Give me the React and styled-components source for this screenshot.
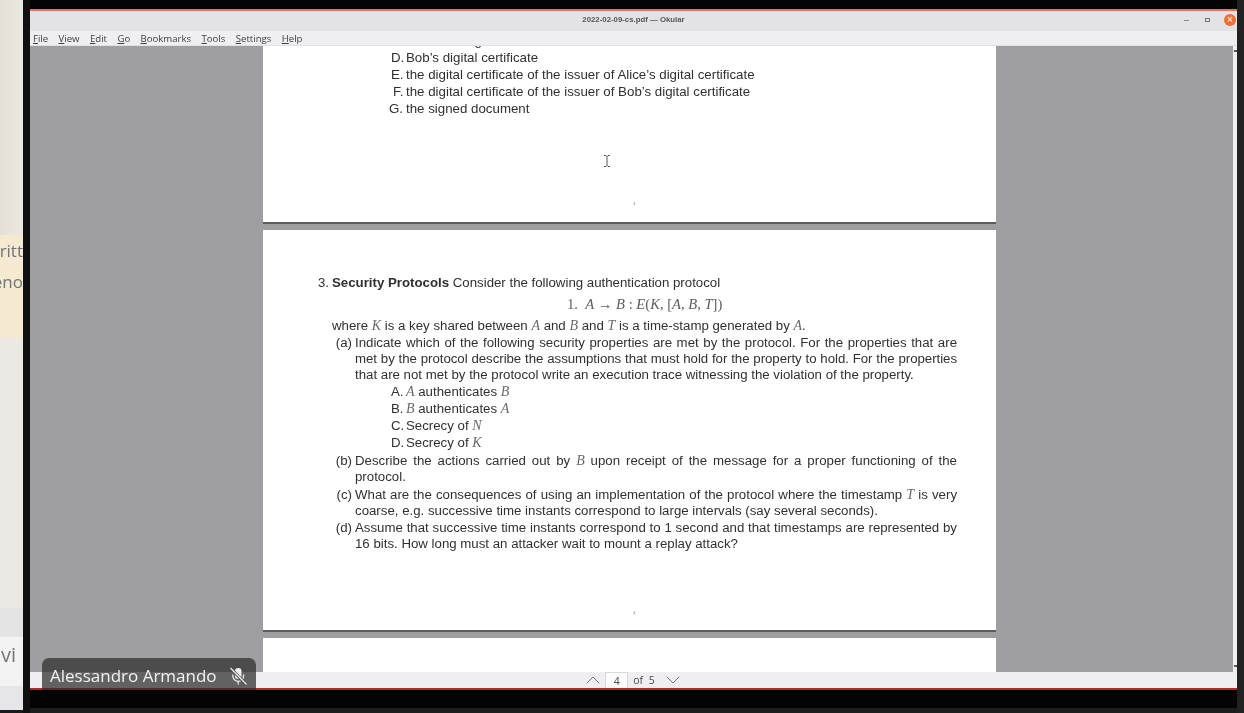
import React from "react";
import styled, { createGlobalStyle } from "styled-components";
import { ChevronUp, ChevronDown } from "lucide-react";

const Global = createGlobalStyle`
  html, body { margin: 0; padding: 0; height: 100%; background: #1c1c1c; overflow: hidden; }
  #root { height: 100%; }
`;

const Screen = styled.div`
  position: relative;
  width: 1244px;
  height: 713px;
  display: flex;
  overflow: hidden;
  background: #1a1a1a;
  filter: blur(0.35px);
  font-family: "Liberation Sans", Arial, sans-serif;
`;

const SideStrip = styled.div`
  width: 23px;
  height: 710px;
  flex: none;
  display: flex;
  flex-direction: column;
  background: #e9e5dd;
  overflow: hidden;
`;
const SideBlock = styled.div`
  flex: ${(p) => p.$grow || "none"};
  height: ${(p) => (p.$h ? `${p.$h}px` : "auto")};
  padding-right: ${(p) => p.$pr || 0}px;
  background: ${(p) => p.$bg};
  color: #6f7478;
  font-family: "Open Sans", sans-serif;
  display: flex;
  flex-direction: column;
  align-items: flex-end;
  white-space: nowrap;
`;
const SideText = styled.span`
  font-size: ${(p) => p.$size}px;
  line-height: ${(p) => p.$lh}px;
  margin-top: ${(p) => p.$mt || 0}px;
`;

const Gutter = styled.div`
  width: 7px;
  flex: none;
  background: #101010;
`;

const Desktop = styled.div`
  width: 1207px;
  flex: none;
  display: flex;
  flex-direction: column;
  height: 713px;
`;
const TopBlack = styled.div`
  height: 9px;
  flex: none;
  background: #040404;
`;
const RedLine = styled.div`
  height: 2px;
  flex: none;
  background: ${(p) => p.$c};
`;
const TitleBar = styled.div`
  height: 20px;
  flex: none;
  background: #e3e2e4;
  display: flex;
  align-items: center;
  justify-content: center;
  position: relative;
  font-size: 7.8px;
  font-weight: 700;
  color: #55555a;
  padding-bottom: 3px;
  box-sizing: border-box;
`;
const WinControls = styled.div`
  position: absolute;
  right: 1px;
  top: 0;
  height: 100%;
  display: flex;
  align-items: center;
  gap: 12px;
  padding-bottom: 2px;
  box-sizing: border-box;
`;
const MinBtn = styled.span`
  width: 5px;
  height: 1px;
  background: #8a8a8a;
`;
const MaxBtn = styled.span`
  border: 1px solid #777;
  width: 3px;
  height: 2px;
  margin-left: 4px;
`;
const CloseBtn = styled.span`
  width: 12px;
  height: 12px;
  border-radius: 50%;
  background: #ee6f33;
  color: #f8ddcc;
  font-size: 10px;
  font-weight: 700;
  line-height: 12px;
  text-align: center;
  margin-left: 2px;
`;
const MenuBar = styled.div`
  height: 15px;
  flex: none;
  background: #efeef0;
  display: flex;
  align-items: center;
  gap: 10.4px;
  padding-left: 3px;
  font-family: "Open Sans", sans-serif;
  font-size: 9.6px;
  color: #3e3e42;
  box-shadow: inset 0 -1px 0 #e0dfe2;
`;
const MenuItem = styled.span`
  u { text-underline-offset: 1px; }
`;

const Main = styled.div`
  flex: 1;
  min-height: 0;
  display: flex;
  background: #efeef0;
`;
const Viewport = styled.div`
  width: 1203px;
  flex: none;
  background: #9f9fa1;
  overflow: hidden;
  display: flex;
  flex-direction: column;
  align-items: center;
  gap: 6px;
`;
const ScrollBar = styled.div`
  flex: 1;
  display: flex;
  flex-direction: column;
  justify-content: space-between;
  align-items: flex-end;
  padding: 4px 0 5px;
  background: #f0eff1;
`;
const ScrollMark = styled.span`
  width: 3px;
  height: 2px;
  background: #55555a;
`;

const Page = styled.div`
  position: relative;
  flex: none;
  width: 733px;
  margin-right: 4px;
  height: ${(p) => p.$h}px;
  margin-top: ${(p) => p.$mt || 0}px;
  background: #fff;
  border-bottom: ${(p) => (p.$open ? "none" : "2px solid #5c5c5e")};
  box-sizing: border-box;
  padding: ${(p) => p.$pad};
  color: #303032;
  font-size: ${(p) => p.$size || 13.25}px;
  line-height: 16px;
`;
const PageDot = styled.span`
  position: absolute;
  left: 370px;
  bottom: ${(p) => p.$b}px;
  font-size: 4px;
  line-height: 4px;
  color: #777;
`;
const Cursor = styled.svg`
  position: absolute;
  left: 340px;
  top: 131px;
`;
const Row = styled.div`
  display: flex;
  height: ${(p) => p.$h || 17}px;
  padding-left: ${(p) => p.$pl || 0}px;
  margin-top: ${(p) => p.$mt || 0}px;
  white-space: nowrap;
`;
const Label = styled.span`
  width: ${(p) => p.$w}px;
  flex: none;
  text-align: right;
  padding-right: 3px;
  box-sizing: border-box;
`;
const Body = styled.div`
  flex: 1;
  min-width: 0;
`;
const Line = styled.div`
  height: 16px;
  line-height: 16px;
  text-align: ${(p) => (p.$j ? "justify" : "left")};
  text-align-last: ${(p) => (p.$j ? "justify" : "left")};
  letter-spacing: ${(p) => (p.$tight ? "-0.04px" : "normal")};
  white-space: normal;
`;
const M = styled.i`
  font-family: "Liberation Serif", "Times New Roman", serif;
  font-size: 14px;
  line-height: 10px;
  color: #6a6a6e;
`;
const Formula = styled.div`
  height: 21px;
  line-height: 21px;
  padding-left: 249px;
  margin-top: 2px;
  font-family: "Liberation Serif", serif;
  font-size: 14.6px;
  color: #5c5c60;
  white-space: nowrap;
`;

const BottomBar = styled.div`
  height: 16px;
  flex: none;
  background: #efeef0;
  display: flex;
  align-items: center;
  justify-content: center;
  padding-right: 1px;
  font-family: "Open Sans", sans-serif;
  font-size: 10.5px;
  color: #4a4a4e;
  svg { flex: none; }
`;
const PageBox = styled.span`
  width: 23px;
  height: 16px;
  margin-right: 5px;
  background: #fbfbfc;
  border: 1px solid #d8d8da;
  border-bottom: none;
  box-sizing: border-box;
  text-align: center;
  line-height: 16px;
`;
const OfText = styled.span`
  margin-right: 6px;
  word-spacing: 3px;
`;
const BlackBand = styled.div`
  height: 18px;
  flex: none;
  background: #040404;
`;
const DarkBand = styled.div`
  height: 5px;
  flex: none;
  background: #1d1d1d;
`;
const RightEdge = styled.div`
  flex: 1;
  background: #222;
`;
const NameTag = styled.div`
  position: absolute;
  left: 42px;
  top: 658px;
  width: 214px;
  height: 32px;
  border-radius: 7px 7px 0 0;
  background: rgba(45, 45, 45, 0.72);
  color: #f2f2f2;
  display: flex;
  align-items: center;
  gap: 11px;
  padding: 3px 0 0 8px;
  box-sizing: border-box;
  font-family: "Open Sans", sans-serif;
  font-size: 17px;
  white-space: nowrap;
`;

const menu = [["F", "ile"], ["V", "iew"], ["E", "dit"], ["G", "o"], ["B", "ookmarks"], ["T", "ools"], ["S", "ettings"], ["H", "elp"]];

const MutedMic = () => (
  <svg width="20" height="20" viewBox="0 0 20 20" fill="none">
    <rect x="7" y="2" width="6.5" height="11" rx="3.2" fill="#f0f0f0" />
    <path d="M4.8 8.5v1.5a5.4 5.4 0 0 0 10.8 0V8.5M10.2 15.5v3" stroke="#e8e8e8" strokeWidth="1.3" />
    <path d="M3 2.5L18 18.5" stroke="#4a4a4a" strokeWidth="3" />
    <path d="M2.5 2L18.5 18.5" stroke="#f0f0f0" strokeWidth="1.3" />
  </svg>
);

export default function App() {
  return (
    <>
      <Global />
      <Screen>
        <SideStrip>
          <SideBlock $h={235} $bg="linear-gradient(90deg,#e4dfd6,#ece9e2)" />
          <SideBlock $h={103} $bg="#f6e9d2">
            <SideText $size={17} $lh={30} $mt={1}>critt</SideText>
            <SideText $size={17} $lh={30} $mt={1}>veno</SideText>
          </SideBlock>
          <SideBlock $h={270} $bg="#ece9e4" />
          <SideBlock $h={29} $bg="#e4e4e5" />
          <SideBlock $h={49} $bg="#f3f3f3" $pr={7}>
            <SideText $size={20} $lh={34} $mt={1}>vi</SideText>
          </SideBlock>
          <SideBlock $grow={1} $bg="#e6e6e8" />
        </SideStrip>
        <Gutter />
        <Desktop>
          <TopBlack />
          <RedLine $c="#e8705a" />
          <TitleBar>
            2022-02-09-cs.pdf — Okular
            <WinControls>
              <MinBtn />
              <MaxBtn />
              <CloseBtn>×</CloseBtn>
            </WinControls>
          </TitleBar>
          <MenuBar>
            {menu.map(([a, b]) => (
              <MenuItem key={a}><u>{a}</u>{b}</MenuItem>
            ))}
          </MenuBar>
          <Main>
            <Viewport>
              <Page $h={200} $mt={-22} $size={13.3} $pad="9px 0 0 0">
                <Row $pl={143} $h={17}><Line>C. Alice’s digital certificate</Line></Row>
                <Row $pl={128}><Label $w={15}>D.</Label><Line>Bob’s digital certificate</Line></Row>
                <Row $pl={128}><Label $w={15}>E.</Label><Line>the digital certificate of the issuer of Alice’s digital certificate</Line></Row>
                <Row $pl={130}><Label $w={13}>F.</Label><Line>the digital certificate of the issuer of Bob’s digital certificate</Line></Row>
                <Row $pl={125}><Label $w={18}>G.</Label><Line>the signed document</Line></Row>
                <Cursor width="8" height="12" viewBox="0 0 8 12" fill="none" stroke="#555" strokeWidth="1">
                  <path d="M1 .5h2l1 1 1-1h2M4 1.5v9M1 11.5h2l1-1 1 1h2" />
                </Cursor>
                <PageDot $b={16}>3</PageDot>
              </Page>
              <Page $h={402} $pad="45px 39px 0 55px">
                <Row><Label $w={14}>3.</Label><span><b>Security Protocols</b> Consider the following authentication protocol</span></Row>
                <Formula>1.&nbsp;&nbsp;<i>A</i> → <i>B</i> : <i>E</i>(<i>K</i>, [<i>A</i>, <i>B</i>, <i>T</i>])</Formula>
                <Row $pl={14} $mt={3}><span>where <M>K</M> is a key shared between <M>A</M> and <M>B</M> and <M>T</M> is a time-stamp generated by <M>A</M>.</span></Row>
                <Row $h={48} $mt={0}>
                  <Label $w={37}>(a)</Label>
                  <Body>
                    <Line $j>Indicate which of the following security properties are met by the protocol. For the properties that are</Line>
                    <Line $j $tight>met by the protocol describe the assumptions that must hold for the property to hold. For the properties</Line>
                    <Line>that are not met by the protocol write an execution trace witnessing the violation of the property.</Line>
                  </Body>
                </Row>
                <Row $pl={73} $mt={1}><Label $w={15}>A.</Label><span><M>A</M> authenticates <M>B</M></span></Row>
                <Row $pl={73}><Label $w={15}>B.</Label><span><M>B</M> authenticates <M>A</M></span></Row>
                <Row $pl={73}><Label $w={15}>C.</Label><span>Secrecy of <M>N</M></span></Row>
                <Row $pl={73} $h={18}><Label $w={15}>D.</Label><span>Secrecy of <M>K</M></span></Row>
                <Row $h={34}>
                  <Label $w={37}>(b)</Label>
                  <Body>
                    <Line $j>Describe the actions carried out by <M>B</M> upon receipt of the message for a proper functioning of the</Line>
                    <Line>protocol.</Line>
                  </Body>
                </Row>
                <Row $h={33}>
                  <Label $w={37}>(c)</Label>
                  <Body>
                    <Line $j>What are the consequences of using an implementation of the protocol where the timestamp <M>T</M> is very</Line>
                    <Line>coarse, e.g. successive time instants correspond to large intervals (say several seconds).</Line>
                  </Body>
                </Row>
                <Row $h={33}>
                  <Label $w={37}>(d)</Label>
                  <Body>
                    <Line $j>Assume that successive time instants correspond to 1 second and that timestamps are represented by</Line>
                    <Line>16 bits. How long must an attacker wait to mount a replay attack?</Line>
                  </Body>
                </Row>
                <PageDot $b={15}>4</PageDot>
              </Page>
              <Page $h={60} $open $pad="0" />
            </Viewport>
            <ScrollBar>
              <ScrollMark />
              <ScrollMark />
            </ScrollBar>
          </Main>
          <BottomBar>
            <ChevronUp size={24} strokeWidth={0.9} color="#66666a" />
            <PageBox>4</PageBox>
            <OfText>of 5</OfText>
            <ChevronDown size={24} strokeWidth={0.9} color="#66666a" />
          </BottomBar>
          <RedLine $c="#b8262a" />
          <BlackBand />
          <DarkBand />
        </Desktop>
        <RightEdge />
        <NameTag>
          Alessandro Armando
          <MutedMic />
        </NameTag>
      </Screen>
    </>
  );
}
